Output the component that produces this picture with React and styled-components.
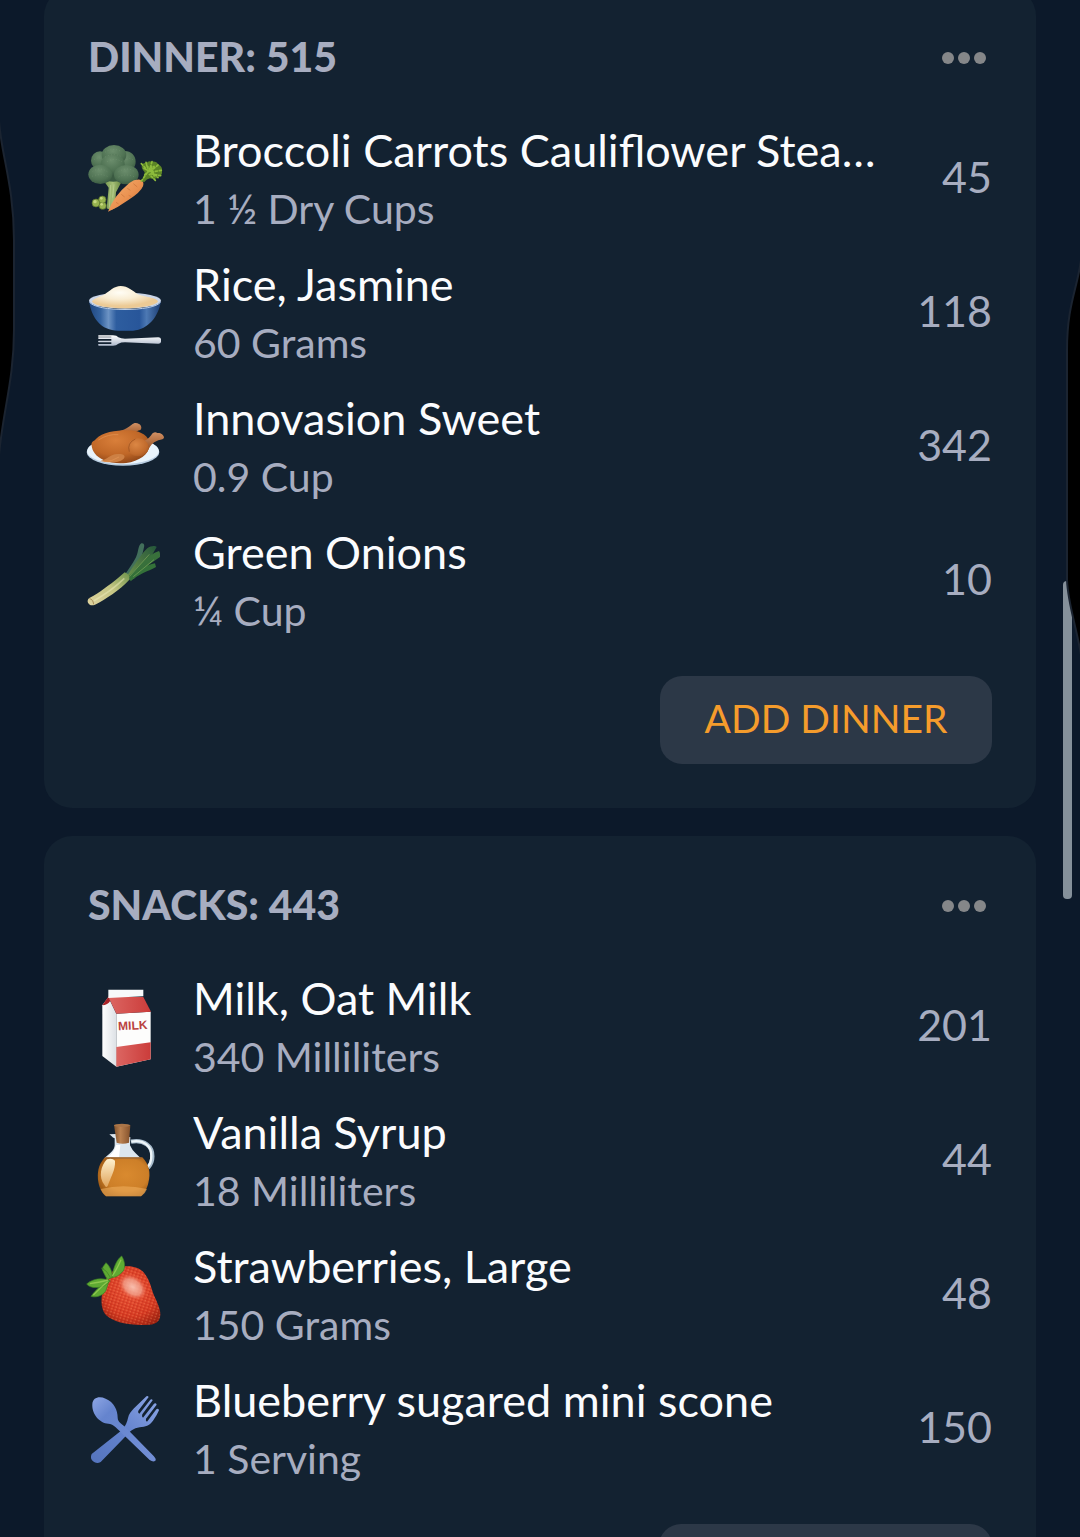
import { useId } from 'react';
import styled, { createGlobalStyle } from 'styled-components';

const GlobalStyle = createGlobalStyle`
    :root {
        --clr-page: #0c192a;
        --clr-card: #132231;
        --clr-button: #2c3847;
        --clr-text: #fbfcfe;
        --clr-muted: #a7adc0;
        --clr-dots: #858789;
        --clr-accent: #f59c2c;
        --clr-thumb: #85909a;
    }
    * {
        box-sizing: border-box;
    }
    body {
        margin: 0;
        background: var(--clr-page);
        font-family: Lato, 'Open Sans', sans-serif;
    }
`;

const Broccoli = ({ id }) => (
    <Icon viewBox='54 36 228 228' aria-hidden='true'>
        <defs>
            <radialGradient id={`${id}a`} cx='.45' cy='.3' r='.75'>
                <stop offset='0' stopColor='#6b8d6c' />
                <stop offset='.65' stopColor='#4f7253' />
                <stop offset='1' stopColor='#38573f' />
            </radialGradient>
            <linearGradient id={`${id}b`}>
                <stop offset='0' stopColor='#6d9048' />
                <stop offset='.5' stopColor='#a5bf76' />
                <stop offset='1' stopColor='#64843e' />
            </linearGradient>
            <linearGradient id={`${id}c`} x1='0' y1='0' x2='1' y2='1'>
                <stop offset='0' stopColor='#f5b070' />
                <stop offset='.55' stopColor='#ea9150' />
                <stop offset='1' stopColor='#b9602c' />
            </linearGradient>
        </defs>
        <path d='M100 154l16 22-6 62q12 8 24 0l4-48 18-34z' fill={`url(#${id}b)`} />
        <path d='M122 168l-4 68M132 166l-4 40' stroke='#c4d69a' strokeWidth='3' opacity='.6' />
        <path d='M80 80h100v68q-50 20-100 0z' fill='#3a5a41' />
        <g fill={`url(#${id}a)`}>
            <ellipse cx='90' cy='95' rx='27' ry='28' />
            <ellipse cx='165' cy='98' rx='32' ry='32' />
            <ellipse cx='132' cy='78' rx='37' ry='30' />
            <ellipse cx='128' cy='106' rx='36' ry='32' />
            <ellipse cx='91' cy='136' rx='36' ry='29' />
            <ellipse cx='169' cy='137' rx='37' ry='29' />
        </g>
        <g fill='none' stroke='#8daa87' strokeWidth='3' strokeDasharray='2 7' opacity='.4'>
            <path d='M105 70q24-16 50-2M106 84q26-14 50 0M112 98q20-14 44 0M68 128q20-16 44 0M66 142q24-10 46 0M146 128q24-16 48 0M146 144q24-12 48 0M72 92q14-10 26 0M170 92q12-8 22 4' />
        </g>
        <g fill='#97b34f' stroke='#536d2b' strokeWidth='2'>
            <circle cx='78' cy='222' r='12' />
            <circle cx='98' cy='230' r='11' />
            <circle cx='97' cy='212' r='11' />
        </g>
        <g fill='#c6d881'>
            <circle cx='75' cy='218' r='5' />
            <circle cx='95' cy='226' r='4' />
            <circle cx='94' cy='208' r='4' />
        </g>
        <path d='M114 248q16-46 64-86 16-12 32-10 14 4 9 20-7 18-45 42-30 22-60 34z' fill={`url(#${id}c)`} />
        <path d='M138 220l8 5M154 196l10 8M172 178l9 6M190 164l12 10M176 199l8 4' stroke='#c8733a' strokeWidth='2' />
        <path d='M216 156q6-14 8-26-12-14-8-22 6-8 14-6 4-8 16-4 14-2 18 8 14 6 12 20 2 12-10 18-12 10-26 4-10 2-18 12z' fill='#5b8426' />
        <g fill='none' stroke='#8dbb3c' strokeWidth='5' strokeLinecap='round' strokeDasharray='6 6'>
            <path d='M214 156l20-28M214 104l20 22M228 100l8 26M246 98l-8 28M264 108l-24 20M274 124l-34 6M272 140l-32-6M256 154l-18-18M222 118l16 10M230 110l34 36M244 112l10 34M224 138l28-26' />
        </g>
    </Icon>
);

const Rice = ({ id }) => (
    <Icon viewBox='54 18 228 228' aria-hidden='true'>
        <defs>
            <linearGradient id={`${id}a`}>
                <stop offset='0' stopColor='#1f467f' />
                <stop offset='.16' stopColor='#33629f' />
                <stop offset='.27' stopColor='#6c93c4' />
                <stop offset='.38' stopColor='#2d5d9f' />
                <stop offset='.7' stopColor='#28569a' />
                <stop offset='.8' stopColor='#4d79b4' />
                <stop offset='1' stopColor='#1c3d72' />
            </linearGradient>
            <radialGradient id={`${id}b`} cx='.42' cy='.3' r='.6'>
                <stop offset='0' stopColor='#fffdf5' />
                <stop offset='.5' stopColor='#f9edd3' />
                <stop offset='1' stopColor='#ecca95' />
            </radialGradient>
            <linearGradient id={`${id}c`} x1='0' y1='0' x2='0' y2='1'>
                <stop offset='0' stopColor='#ffffff' />
                <stop offset='1' stopColor='#aeb9cb' />
            </linearGradient>
        </defs>
        <path d='M57 96c8 50 35 89 88 89h44c47-4 76-42 84-89-35 34-181 35-216 0z' fill={`url(#${id}a)`} />
        <ellipse cx='165' cy='95' rx='108' ry='24' fill='#cbd6e8' />
        <path d='M66 98c2-10 26-14 38-22 14-9 28-25 48-25 22 0 36 15 52 25 14 7 58 10 60 22-20 25-178 27-198 0z' fill={`url(#${id}b)`} />
        <path d='M58 99c20 30 194 30 214 0' fill='none' stroke='#bccfe9' strokeWidth='3' />
        <path d='M86 199h43q12 0 16 6 8 4 20 4l100-4q7 0 8 5v9q-1 5-8 5l-100-4q-12 0-20 4-6 6-16 6H86q-4-3 0-5h38v-5H86q-4-3 0-5h38v-5H86q-4-3 0-5h38v-2H86q-4-2 0-4z' fill={`url(#${id}c)`} />
    </Icon>
);

const Poultry = ({ id }) => (
    <Icon viewBox='54 30 228 228' aria-hidden='true'>
        <defs>
            <radialGradient id={`${id}a`} cx='.42' cy='.3' r='.75'>
                <stop offset='0' stopColor='#d97f3a' />
                <stop offset='.6' stopColor='#c06727' />
                <stop offset='1' stopColor='#8a4316' />
            </radialGradient>
            <radialGradient id={`${id}c`} cx='.4' cy='.35' r='.75'>
                <stop offset='0' stopColor='#dc8744' />
                <stop offset='.7' stopColor='#c06a2c' />
                <stop offset='1' stopColor='#a2541f' />
            </radialGradient>
            <linearGradient id={`${id}b`} x1='0' y1='0' x2='0' y2='1'>
                <stop offset='0' stopColor='#d09064' />
                <stop offset='1' stopColor='#985020' />
            </linearGradient>
        </defs>
        <ellipse cx='159' cy='159' rx='109' ry='41' fill='#b8cde1' />
        <ellipse cx='159' cy='156' rx='108' ry='39' fill='#e9f4fc' />
        <path d='M128 103c20-7 38-10 57-26 7-7 16-6 22-2 8 4 9 14 4 18-8 2-14 5-18 12-18 12-50 8-65-2z' fill={`url(#${id}b)`} />
        <path d='M65 141c-3-14 8-14 12-20 22-24 67-28 105-27 31 2 57 18 57 43-1 30-33 49-70 55-43 5-80-8-95-29-6-8-8-16-9-22z' fill={`url(#${id}a)`} />
        <path d='M214 130c12-6 22-10 30-22 4-8 12-10 18-6 10-1 19 5 20 13-1 9-12 6-20 10-14 5-22 16-28 28z' fill={`url(#${id}b)`} />
        <ellipse cx='204' cy='145' rx='32' ry='27' fill={`url(#${id}c)`} />
        <path d='M91 186c22-5 28-20 52-21 16-1 26 4 18 14-10 12-44 14-70 7z' fill='#cd8044' />
        <path d='M102 188q24 0 45-14M85 123q30-19 60-16' fill='none' stroke='#e79a59' strokeWidth='3' opacity='.6' />
        <path d='M178 158q-8-26 18-38' fill='none' stroke='#8f4617' strokeWidth='3' opacity='.6' />
    </Icon>
);

const Leek = ({ id }) => (
    <Icon viewBox='54 42 228 228' aria-hidden='true'>
        <defs>
            <linearGradient id={`${id}a`} x1='0' y1='1' x2='1' y2='0'>
                <stop offset='0' stopColor='#dfd3a0' />
                <stop offset='.55' stopColor='#c3c582' />
                <stop offset='1' stopColor='#6e934b' />
            </linearGradient>
            <linearGradient id={`${id}b`} x1='0' y1='1' x2='1' y2='0'>
                <stop offset='0' stopColor='#6f944a' />
                <stop offset='1' stopColor='#24563a' />
            </linearGradient>
        </defs>
        <path d='M160 143c12-16 28-39 38-58 8-17 6-36 16-42 8-1 10 5 8 12-3 18-10 38-20 53l-25 45z' fill='#426f5b' />
        <path d='M171 140c20-27 37-59 61-82 10-8 24-8 28-4l-21 37-48 59z' fill={`url(#${id}b)`} />
        <path d='M176 142c27-26 56-66 91-76 4 4 3 12 3 18-16 11-40 27-56 42l-35 28z' fill='#38703b' />
        <path d='M177 145c28-21 51-37 78-42l3 11c-26 14-51 20-76 43z' fill='#347139' />
        <path d='M178 143l60-67M190 143l62-51' stroke='#7ba459' strokeWidth='3' opacity='.7' />
        <path d='M58 207c30-16 61-40 87-61l19-16q16 6 14 22c-27 30-74 60-103 75-9 4-17 2-20-4-4-5-2-13 3-16z' fill={`url(#${id}a)`} />
        <path d='M72 215q52-29 91-67' fill='none' stroke='#f0edbc' strokeWidth='5' opacity='.5' />
        <path d='M58 209q11 1 13 17' fill='none' stroke='#a98f5b' strokeWidth='3' />
    </Icon>
);

const MilkCarton = ({ id }) => (
    <Icon viewBox='54 45 228 228' aria-hidden='true'>
        <defs>
            <linearGradient id={`${id}a`}>
                <stop offset='0' stopColor='#ffffff' />
                <stop offset='1' stopColor='#dde1e5' />
            </linearGradient>
            <linearGradient id={`${id}b`}>
                <stop offset='0' stopColor='#dc6662' />
                <stop offset='1' stopColor='#cb3c3a' />
            </linearGradient>
        </defs>
        <path d='M97 94l18-24 24 49v159l-42-32z' fill={`url(#${id}a)`} />
        <path d='M97 94l19-27 5 13q-8 13-24 14z' fill='#aa2327' />
        <path d='M139 119l103-6v143l-103 22z' fill='#fdfdfc' />
        <path d='M115 69h105l23 44-104 6z' fill={`url(#${id}b)`} />
        <path d='M115 47h105v20l-105 5z' fill='#f7f9fa' />
        <path d='M139 219l103-14v51l-103 22z' fill={`url(#${id}b)`} />
        <text
            x='145'
            y='169'
            fill='#b94240'
            fontFamily='Liberation Sans, sans-serif'
            fontSize='36'
            fontWeight='700'
            transform='rotate(-3 145 168)'
        >
            MILK
        </text>
    </Icon>
);

const SyrupJug = ({ id }) => (
    <Icon viewBox='54 42 228 228' aria-hidden='true'>
        <defs>
            <radialGradient id={`${id}a`} cx='.55' cy='.45' r='.6'>
                <stop offset='0' stopColor='#d98a2f' />
                <stop offset='.7' stopColor='#cd7f28' />
                <stop offset='1' stopColor='#9c5814' />
            </radialGradient>
            <linearGradient id={`${id}b`}>
                <stop offset='0' stopColor='#82522b' />
                <stop offset='.4' stopColor='#ba8150' />
                <stop offset='1' stopColor='#85522c' />
            </linearGradient>
            <linearGradient id={`${id}c`} x1='0' y1='0' x2='0' y2='1'>
                <stop offset='0' stopColor='#fff2cf' />
                <stop offset='1' stopColor='#e0a45c' />
            </linearGradient>
        </defs>
        <path d='M183 98c40-8 65 15 64 44 0 20-6 27-13 34' fill='none' stroke='#a8bccc' strokeWidth='13' />
        <path d='M184 98c39-7 61 15 60 42 0 19-4 26-11 33' fill='none' stroke='#eef5f8' strokeWidth='7' />
        <path d='M118 76l20-1v8l43 1-1 25q6 14 17 24l17 16H101l19-16q14-12 14-24V88q-6-1-9-6z' fill='#dce6ee' />
        <path d='M110 146q23-13 28-38h13l-4 38z' fill='#fff' />
        <path d='M106 145h111c20 22 26 45 18 77-5 20-14 34-22 40H108c-14-11-21-28-24-50-3-29 5-51 22-67z' fill={`url(#${id}a)`} />
        <path d='M108 147h106' stroke='#8b603d' strokeWidth='3' />
        <path d='M92 240q68-17 139 0-5 14-18 22H108q-10-7-16-22z' fill='#efad5b' opacity='.6' />
        <path d='M111 151q16-5 24 4c2 28-14 51-22 76q-5 7-9-2c-20-25-11-60 7-78z' fill={`url(#${id}c)`} />
        <path d='M132 48h49l-4 53q-19 6-37 0z' fill={`url(#${id}b)`} />
        <ellipse cx='156' cy='49' rx='24' ry='5' fill='#aa7548' />
    </Icon>
);

const Strawberry = ({ id }) => (
    <Icon viewBox='54 39 228 228' aria-hidden='true'>
        <defs>
            <radialGradient id={`${id}a`} cx='.5' cy='.4' r='.7'>
                <stop offset='0' stopColor='#ea5236' />
                <stop offset='.65' stopColor='#d63a22' />
                <stop offset='1' stopColor='#96200f' />
            </radialGradient>
            <radialGradient id={`${id}b`}>
                <stop offset='0' stopColor='#f9c4b4' stopOpacity='.95' />
                <stop offset='.6' stopColor='#f2a08a' stopOpacity='.8' />
                <stop offset='1' stopColor='#ea5d43' stopOpacity='0' />
            </radialGradient>
            <pattern id={`${id}c`} width='11' height='9' patternUnits='userSpaceOnUse' patternTransform='rotate(18)'>
                <circle cx='3' cy='2' r='1.5' fill='#fb9a68' />
                <circle cx='8' cy='7' r='1.5' fill='#a01e10' />
            </pattern>
        </defs>
        {[`url(#${id}a)`, `url(#${id}c)`].map((fill) => (
            <path
                key={fill}
                d='M112 100c14-22 44-38 76-32 34 4 50 38 60 76 8 22 24 48 23 68-1 24-18 30-42 31-43 1-88-5-114-24-26-18-22-58-16-82 2-14 6-26 13-37z'
                fill={fill}
            />
        ))}
        <ellipse cx='188' cy='129' rx='49' ry='34' transform='rotate(38 188 129)' fill={`url(#${id}b)`} />
        <g fill='#5faa33' stroke='#3d8224' strokeWidth='2'>
            <path d='M125 101c5-29 14-53 30-65 11 17 12 39 1 49-9 9-18 15-31 16z' />
            <path d='M119 105c-4-15-16-18-21-35l10-14c14 12 20 32 18 44z' />
            <path d='M117 111c-22 10-37 23-54 46 15 5 35-2 44-16z' />
            <path d='M116 108c-21-6-45-6-66 12 12 15 39 12 54 5l17-14z' />
            <path d='M113 108c-7-12-12-20-18-36q16 7 26 28z' />
        </g>
        <path d='M60 119q33-5 54-11M70 153q24-25 43-40M153 47q-12 28-26 49' fill='none' stroke='#a1d35a' strokeWidth='4' opacity='.7' />
    </Icon>
);

const Cutlery = ({ id }) => (
    <Icon viewBox='54 36 228 228' aria-hidden='true'>
        <defs>
            <linearGradient id={`${id}a`} x1='0' y1='0' x2='1' y2='1'>
                <stop offset='0' stopColor='#8ea6e4' />
                <stop offset='.25' stopColor='#6584ce' />
                <stop offset='1' stopColor='#738fd6' />
            </linearGradient>
            <linearGradient id={`${id}b`} x1='1' y1='0' x2='0' y2='1'>
                <stop offset='0' stopColor='#8ca6e5' />
                <stop offset='.5' stopColor='#6483ce' />
                <stop offset='1' stopColor='#5474bd' />
            </linearGradient>
        </defs>
        <path d='M227 54q5-6 9 0l-30 40q-4 7 2 10l33-42q5-3 7 2l-31 42q-3 7 2 10l33-42q6-3 8 3l-32 42q-2 7 3 9l28-37q6-4 8 3-5 13-18 31c-12 17-22 17-40 20-18 2-31 13-42 27l-75 77q-12 7-23-2-10-9-4-22l92-73c10-11 15-24 17-35 2-12 10-20 18-29z' fill={`url(#${id}b)`} />
        <path d='M67 75c2-21 22-24 40-16 25 10 36 34 36 57 0 12 12 19 22 27l86 88q10 11 4 15-6 4-16-3l-90-87c-11-10-20-22-34-22-25-1-50-27-48-59z' fill={`url(#${id}a)`} />
    </Icon>
);

const meals = [
    {
        name: 'Dinner',
        total: 515,
        items: [
            { name: 'Broccoli Carrots Cauliflower Stea…', amount: '1 ½ Dry Cups', calories: 45, art: Broccoli },
            { name: 'Rice, Jasmine', amount: '60 Grams', calories: 118, art: Rice },
            { name: 'Innovasion Sweet', amount: '0.9 Cup', calories: 342, art: Poultry },
            { name: 'Green Onions', amount: '¼ Cup', calories: 10, art: Leek },
        ],
    },
    {
        name: 'Snacks',
        total: 443,
        items: [
            { name: 'Milk, Oat Milk', amount: '340 Milliliters', calories: 201, art: MilkCarton },
            { name: 'Vanilla Syrup', amount: '18 Milliliters', calories: 44, art: SyrupJug },
            { name: 'Strawberries, Large', amount: '150 Grams', calories: 48, art: Strawberry },
            { name: 'Blueberry sugared mini scone', amount: '1 Serving', calories: 150, art: Cutlery },
        ],
    },
];

const FoodRow = ({ item }) => {
    const id = useId();
    const Art = item.art;
    return (
        <Row>
            <Art id={id} />
            <Info>
                <FoodName>{item.name}</FoodName>
                <Amount>{item.amount}</Amount>
            </Info>
            <Calories>{item.calories}</Calories>
        </Row>
    );
};

const MealCard = ({ meal }) => (
    <Card>
        <CardHeader>
            <CardTitle>
                {meal.name}: {meal.total}
            </CardTitle>
            <MoreButton type='button' aria-label={`${meal.name} options`}>
                <Dot />
                <Dot />
                <Dot />
            </MoreButton>
        </CardHeader>
        <FoodList>
            {meal.items.map((item) => (
                <FoodRow key={item.name} item={item} />
            ))}
        </FoodList>
        <AddButton type='button'>Add {meal.name}</AddButton>
    </Card>
);

const App = () => {
    return (
        <>
            <GlobalStyle />
            <Page>
                {meals.map((meal) => (
                    <MealCard key={meal.name} meal={meal} />
                ))}
                <ScrollThumb />
                <EdgeShape $side='left' $top={110} viewBox='0 0 16 400' aria-hidden='true'>
                    <path d='M-1 10C1 45 14 75 14 130v90C14 270 3 300-1 345' fill='#000' stroke='#1b2431' strokeWidth='2' />
                </EdgeShape>
                <EdgeShape $side='right' $top={260} viewBox='0 0 16 400' aria-hidden='true'>
                    <path d='M17 0C13 30 3 45 3 90v230C4 344 12 365 17 395' fill='#000' stroke='#1b2431' strokeWidth='2' />
                </EdgeShape>
            </Page>
        </>
    );
};

export default App;

const Page = styled.main`
    position: relative;
    display: flex;
    flex-direction: column;
    gap: 28px;
    height: 100vh;
    padding: 0 44px;
    overflow: hidden;
`;

const Card = styled.section`
    display: flex;
    flex-direction: column;
    flex-shrink: 0;
    padding: 44px;
    border-radius: 28px;
    background: var(--clr-card);
    /* the list is scrolled a little past the first card's top edge */
    &:first-child {
        margin-top: -12px;
    }
`;

const CardHeader = styled.header`
    display: flex;
    align-items: center;
    justify-content: space-between;
    height: 52px;
    margin-bottom: 28px;
`;

const CardTitle = styled.h2`
    margin: 0;
    padding-bottom: 2px;
    color: var(--clr-muted);
    font-size: 41px;
    font-weight: 900;
    line-height: 50px;
    text-transform: uppercase;
`;

const MoreButton = styled.button`
    display: flex;
    align-items: center;
    gap: 4px;
    height: 44px;
    padding: 0 6px;
    border: 0;
    background: none;
`;

const Dot = styled.span`
    width: 12px;
    height: 12px;
    border-radius: 50%;
    background: var(--clr-dots);
`;

const FoodList = styled.ul`
    margin: 0;
    padding: 0;
    list-style: none;
`;

const Row = styled.li`
    display: flex;
    align-items: center;
    gap: 29px;
    height: 134px;
`;

const Icon = styled.svg`
    flex-shrink: 0;
    width: 76px;
    height: 76px;
    overflow: visible;
`;

const Info = styled.div`
    flex: 1;
    min-width: 0;
`;

const FoodName = styled.h3`
    margin: 0;
    overflow: hidden;
    color: var(--clr-text);
    font-size: 45px;
    font-weight: 400;
    line-height: 60px;
    text-overflow: ellipsis;
    white-space: nowrap;
`;

const Amount = styled.p`
    margin: 0;
    color: var(--clr-muted);
    font-size: 41px;
    line-height: 58px;
`;

const Calories = styled.span`
    padding-bottom: 4px;
    color: var(--clr-muted);
    font-size: 43px;
    line-height: 60px;
`;

const AddButton = styled.button`
    align-self: flex-end;
    min-width: 332px;
    height: 88px;
    margin-top: 28px;
    padding: 0 44px 4px;
    border: 0;
    border-radius: 22px;
    background: var(--clr-button);
    color: var(--clr-accent);
    font-family: inherit;
    font-size: 39px;
    text-transform: uppercase;
`;

const ScrollThumb = styled.div`
    position: absolute;
    top: 581px;
    right: 8px;
    width: 9px;
    height: 318px;
    border-radius: 4px;
    background: var(--clr-thumb);
`;

const EdgeShape = styled.svg`
    position: absolute;
    top: ${({ $top }) => $top}px;
    ${({ $side }) => $side}: 0;
    width: 16px;
    height: 400px;
`;
